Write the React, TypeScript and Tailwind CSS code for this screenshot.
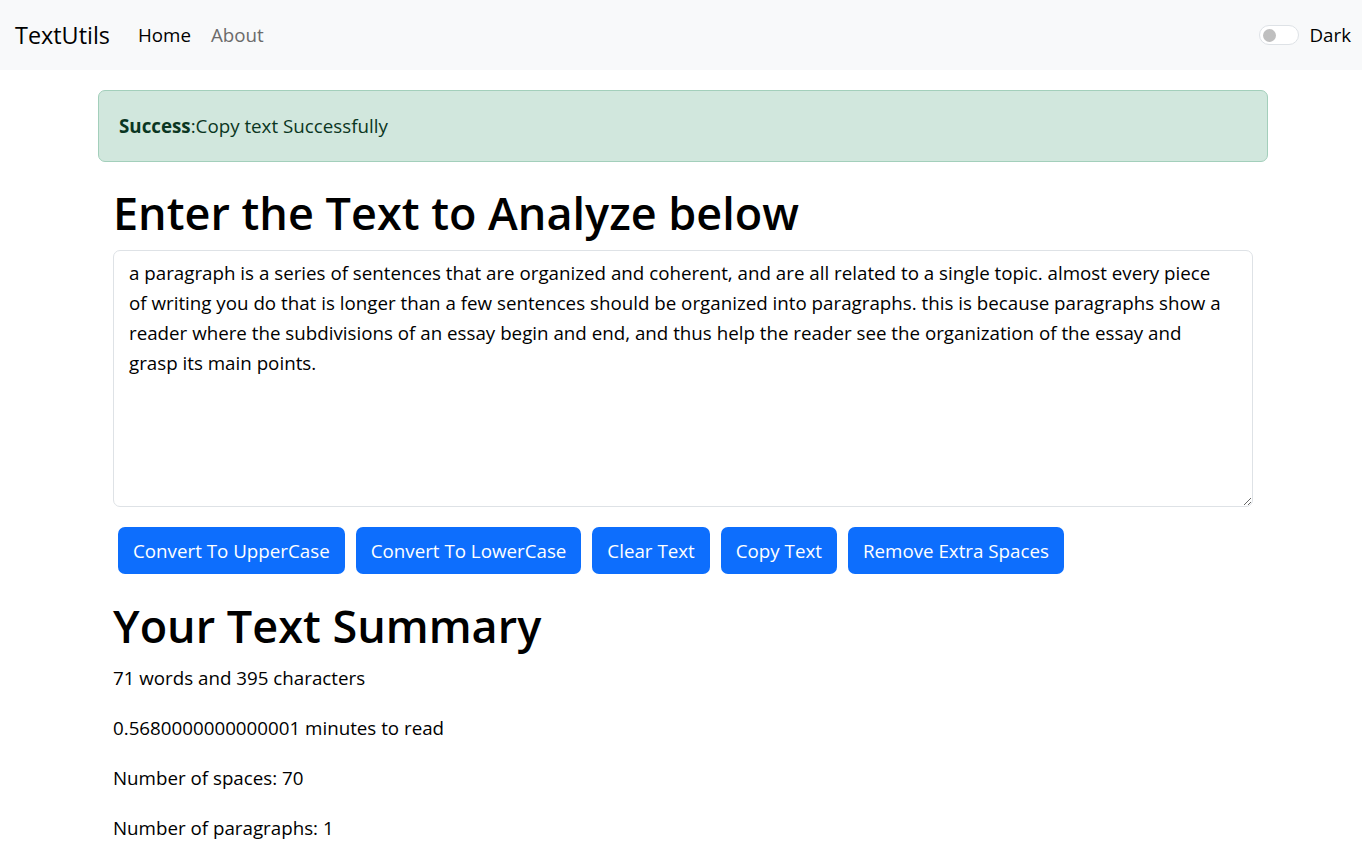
import { useState } from "react";

const sampleText =
  "a paragraph is a series of sentences that are organized and coherent, and are all related to a single topic. almost every piece of writing you do that is longer than a few sentences should be organized into paragraphs. this is because paragraphs show a reader where the subdivisions of an essay begin and end, and thus help the reader see the organization of the essay and grasp its main points.";

const actions = ["Convert To UpperCase", "Convert To LowerCase", "Clear Text", "Copy Text", "Remove Extra Spaces"];

const App = () => {
  const [text, setText] = useState(sampleText);

  return (
    <div className="min-h-screen bg-white text-[#212529] font-['Open_Sans',sans-serif] text-[18.75px] leading-[30px]">
      {/* Navbar */}
      <nav className="h-[70px] bg-[#f8f9fa] flex items-center pl-[15px] pr-[11px]">
        <a className="text-[23.4px] text-black mr-[18px]">TextUtils</a>
        <ul className="flex items-center">
          <li className="px-[10px] text-black">Home</li>
          <li className="px-[10px] text-[#6b6b6b]">About</li>
        </ul>
        <div className="ml-auto flex items-center gap-[10px]">
          <div className="w-[40px] h-[20px] rounded-full border border-[#dee2e6] bg-white flex items-center px-[3px]">
            <span className="w-[13px] h-[13px] rounded-full bg-[#bfbfbf]" />
          </div>
          <span className="text-black">Dark</span>
        </div>
      </nav>

      {/* Alert */}
      <div className="mt-[20px] ml-[98px] w-[1170px] h-[72px] px-[20px] flex items-center rounded-[7px] border border-[#a3cfbb] bg-[#d1e7dd] text-[#0a3622]">
        <span>
          <strong className="font-bold">Success</strong>:Copy text Successfully
        </span>
      </div>

      {/* Main */}
      <div className="w-[1140px] ml-[113px] pt-[22px]">
        <h1 className="text-[45px] leading-[58px] font-semibold text-black mb-[8px]">Enter the Text to Analyze below</h1>
        <textarea
          value={text}
          onChange={(e) => setText(e.target.value)}
          rows={8}
          className="block w-full h-[257px] pl-[15px] pr-[24px] py-[7px] border border-[#dee2e6] rounded-[7px] text-black resize-y outline-none"
        />
        <div className="flex mt-[20px]">
          {actions.map((label) => (
            <button
              key={label}
              className="mx-[5.5px] first:ml-[5px] h-[47px] px-[15px] rounded-[7px] bg-[#0d6efd] text-white"
            >
              {label}
            </button>
          ))}
        </div>

        <div className="mt-[23px] text-black">
          <h1 className="text-[45px] leading-[58px] font-semibold mb-[8px]">Your Text Summary</h1>
          <p className="mb-[20px]">71 words and 395 characters</p>
          <p className="mb-[20px]">0.5680000000000001 minutes to read</p>
          <p className="mb-[20px]">Number of spaces: 70</p>
          <p className="mb-[20px]">Number of paragraphs: 1</p>
        </div>
      </div>
    </div>
  );
};

export default App;
